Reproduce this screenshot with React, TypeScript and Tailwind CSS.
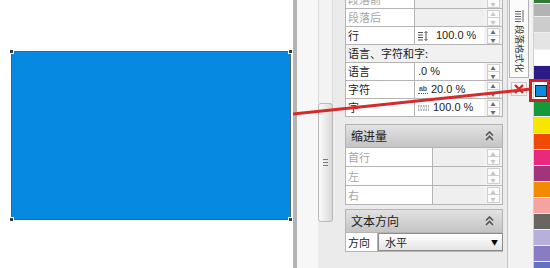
import type { ReactNode } from "react";

const cjk = "font-['Noto_Sans_CJK_SC','Noto_Sans',sans-serif]";
const num = "font-['Liberation_Sans',Arial,sans-serif]";

function Spinner({ disabled = false }: { disabled?: boolean }) {
  const tri = disabled ? "text-[#c4c4c4]" : "text-[#6a6a6a]";
  return (
    <div className="flex w-[19px] shrink-0 flex-col items-center justify-center gap-0 border-r border-[#b4b4b4] bg-[#f2f2f2]">
      <div className={`flex h-[8px] w-[13px] items-center justify-center border border-[#cfcfcf] bg-[#fbfbfb] text-[5px] leading-none ${tri}`}>▲</div>
      <div className={`flex h-[8px] w-[13px] items-center justify-center border border-t-0 border-[#cfcfcf] bg-[#fbfbfb] text-[5px] leading-none ${tri}`}>▼</div>
    </div>
  );
}

function LineIcon() {
  return (
    <svg width="10" height="10" viewBox="0 0 10 10" className="mr-[5px] shrink-0">
      <path d="M0 1.5h5M0 4h5M0 6.5h5M0 9h5" stroke="#555" strokeWidth="1" />
      <path d="M8 0.5v9M6.5 2l1.5-1.5L9.5 2M6.5 8l1.5 1.5L9.5 8" stroke="#555" strokeWidth="1" fill="none" />
    </svg>
  );
}

function CharIcon() {
  return (
    <span className={`${num} flex h-[10px] shrink-0 flex-col items-center text-[7px] font-bold leading-[7px] text-[#555]`}>
      ab
      <span className="mt-[1px] block h-0 w-[10px] border-t border-dotted border-[#555]" />
    </span>
  );
}

function WordIcon() {
  return (
    <svg width="11" height="8" viewBox="0 0 11 8" className="mr-[1px] shrink-0">
      <path d="M0 2h11M0 6h11" stroke="#666" strokeWidth="1" strokeDasharray="1.5 1" />
      <path d="M0 4h11" stroke="#aaa" strokeWidth="1" strokeDasharray="1 1" />
    </svg>
  );
}

function Row({
  label,
  value,
  icon,
  disabled = false,
}: {
  label: string;
  value?: string;
  icon?: ReactNode;
  disabled?: boolean;
}) {
  return (
    <div className="flex h-[18px] border-b border-[#b4b4b4]">
      <div
        className={`flex w-[70px] shrink-0 items-center border-x border-[#b4b4b4] bg-white pl-[2px] ${
          disabled ? "text-[#a6a6a6]" : "text-[#1c1c1c]"
        }`}
      >
        {label}
      </div>
      <div
        className={`flex w-[69px] shrink-0 items-center gap-[3px] pl-[3px] ${
          disabled ? "bg-[#efefef]" : "bg-white"
        } ${num} text-[11px] text-[#1c1c1c]`}
      >
        {icon}
        {value}
      </div>
      <Spinner disabled={disabled} />
    </div>
  );
}

function Chevrons() {
  return (
    <svg width="9" height="10" viewBox="0 0 9 10">
      <path d="M1 4.5l3.5-3.5L8 4.5M1 9l3.5-3.5L8 9" stroke="#555" strokeWidth="1.6" fill="none" />
    </svg>
  );
}

function SectionHeader({ title }: { title: string }) {
  return (
    <div className="flex h-[24px] items-center justify-between border border-[#b4b4b4] bg-gradient-to-b from-[#e2e2e2] to-[#c4c4c4] pl-[5px] pr-[8px] text-[12px] text-[#1c1c1c]">
      <span>{title}</span>
      <Chevrons />
    </div>
  );
}

function IndentRow({ label }: { label: string }) {
  return (
    <div className="flex h-[19px] border-b border-[#b4b4b4]">
      <div className="flex w-[88px] shrink-0 items-center border-x border-[#b4b4b4] bg-white pl-[2px] text-[#a6a6a6]">
        {label}
      </div>
      <div className="w-[51px] shrink-0 bg-[#efefef]" />
      <Spinner disabled />
    </div>
  );
}

const swatches = [
  { h: 4, c: "#2f7a36" },
  { h: 13, c: "#b3b3b3" },
  { h: 16, c: "#cccccc" },
  { h: 17, c: "#e4e4e4" },
  { h: 16, c: "#ffffff" },
  { h: 16, c: "#2c1a86" },
  { h: 18, c: "sel" },
  { h: 17, c: "#17983a" },
  { h: 17, c: "#f6e600" },
  { h: 16, c: "#f04a05" },
  { h: 16, c: "#e8297c" },
  { h: 16, c: "#a2347c" },
  { h: 16, c: "#f28a00" },
  { h: 16, c: "#f5a3a0" },
  { h: 16, c: "#6b6561" },
  { h: 16, c: "#b6b0da" },
  { h: 16, c: "#8a7cc2" },
  { h: 16, c: "#6271c2" },
];

export default function App() {
  return (
    <div className={`relative flex h-[268px] w-[550px] overflow-hidden bg-white ${cjk} text-[11px] leading-none`}>
      {/* drawing canvas */}
      <div className="w-[293px] shrink-0 bg-white pl-[11px] pt-[51px]">
        <div className="relative h-[169px] w-[280px] border border-[#44667f] bg-[#0689e0]">
          <span className="absolute -left-[3px] -top-[3px] h-[5px] w-[5px] border border-white bg-[#3a3a3a]" />
          <span className="absolute -right-[3px] -top-[3px] h-[5px] w-[5px] border border-white bg-[#3a3a3a]" />
          <span className="absolute -bottom-[3px] -left-[3px] h-[5px] w-[5px] border border-white bg-[#3a3a3a]" />
          <span className="absolute -bottom-[3px] -right-[3px] h-[5px] w-[5px] border border-white bg-[#3a3a3a]" />
        </div>
      </div>
      <div className="w-[4px] shrink-0 bg-[#b3b3b3]" />
      <div className="w-[21px] shrink-0 bg-[#f7f7f7]" />

      {/* docker splitter */}
      <div className="flex w-[15px] shrink-0 flex-col bg-[#ebebeb]">
        <div className="h-[103px] border-x border-[#dadada] bg-[#f3f3f3]" />
        <div className="flex h-[119px] flex-col items-center justify-center gap-[2px] rounded-[3px] border border-[#b8b8b8] bg-gradient-to-r from-[#fbfbfb] to-[#d9d9d9]">
          <span className="block h-px w-[5px] bg-[#7a7a7a]" />
          <span className="block h-px w-[5px] bg-[#7a7a7a]" />
          <span className="block h-px w-[5px] bg-[#7a7a7a]" />
        </div>
      </div>
      <div className="w-[12px] shrink-0 bg-[#ebebeb]" />

      {/* paragraph panel */}
      <div className="w-[158px] shrink-0 overflow-hidden bg-[#ebebeb]">
        <div className="-mt-[10px] border-t border-[#b4b4b4]">
          <Row label="段落前" disabled />
          <Row label="段落后" disabled />
          <Row label="行" value="100.0 %" icon={<LineIcon />} />
          <div className="flex h-[18px] items-center border-x border-b border-[#b4b4b4] bg-[#f1f1f1] pl-[2px] text-[#1c1c1c]">
            语言、字符和字:
          </div>
          <Row label="语言" value=".0 %" />
          <Row label="字符" value="20.0 %" icon={<CharIcon />} />
          <Row label="字" value="100.0 %" icon={<WordIcon />} />
        </div>

        <div className="mt-[7px]">
          <SectionHeader title="缩进量" />
          <IndentRow label="首行" />
          <IndentRow label="左" />
          <IndentRow label="右" />
        </div>

        <div className="mt-[4px]">
          <SectionHeader title="文本方向" />
          <div className="flex h-[19px] border-b border-[#b4b4b4]">
            <div className="flex w-[33px] shrink-0 items-center border-x border-[#b4b4b4] bg-white pl-[2px] text-[#1c1c1c]">
              方向
            </div>
            <div className="flex flex-1 items-center justify-between border border-[#8c8c8c] bg-gradient-to-b from-white to-[#e4e4e4] pl-[6px] pr-[4px] text-[#1c1c1c]">
              <span>水平</span>
              <span className="text-[7px] text-black">▼</span>
            </div>
          </div>
        </div>
      </div>
      <div className="w-[4px] shrink-0 bg-[#ebebeb]" />

      {/* docker tabs */}
      <div className="flex w-[23px] shrink-0 flex-col items-center border-l border-[#c4c4c4] bg-[#f2f2f2]">
        <div className="flex h-[78px] w-[20px] flex-col items-center border-x border-b border-[#b4b4b4] bg-[#fbfbfb] pt-[10px]">
          <svg width="9" height="12" viewBox="0 0 9 12">
            <path d="M0 1.5h6M0 4h6M0 6.5h6M0 9h6M0 11.5h6" stroke="#666" strokeWidth="1" />
            <path d="M8 0v12" stroke="#666" strokeWidth="1" />
          </svg>
          <span className="mt-[3px] text-[9.5px] text-[#333] [text-orientation:sideways] [writing-mode:vertical-rl]">
            段落格式化
          </span>
        </div>
        <div className="mt-[4px] flex h-[14px] w-[16px] items-center justify-center border border-[#c8c8c8] bg-[#f8f8f8]">
          <svg width="10" height="10" viewBox="0 0 10 10">
            <path d="M1 1l8 8M9 1l-8 8" stroke="#d42424" strokeWidth="2.4" />
          </svg>
        </div>
      </div>
      <div className="w-[3px] shrink-0 bg-[#f2f2f2]" />

      {/* colour palette */}
      <div className="flex w-[17px] shrink-0 flex-col border-l border-[#d0d0d0]">
        {swatches.map((s, i) =>
          s.c === "sel" ? (
            <div key={i} className="shrink-0 bg-white pl-[1px] pt-[3px]" style={{ height: s.h }}>
              <div className="h-[12px] w-[12px] border border-[#222] bg-[#0a8ae2]" />
            </div>
          ) : (
            <div key={i} className="shrink-0 border-b border-[#efefef]" style={{ height: s.h, backgroundColor: s.c }} />
          )
        )}
      </div>

      {/* callout overlay */}
      <svg className="pointer-events-none absolute inset-0" width="550" height="268">
        <line x1="293" y1="114" x2="531" y2="89" stroke="#d52b2b" strokeWidth="3" />
      </svg>
      <div className="pointer-events-none absolute left-[529px] top-[79px] h-[23px] w-[21px] border-[3px] border-[#d42020]" />
    </div>
  );
}
